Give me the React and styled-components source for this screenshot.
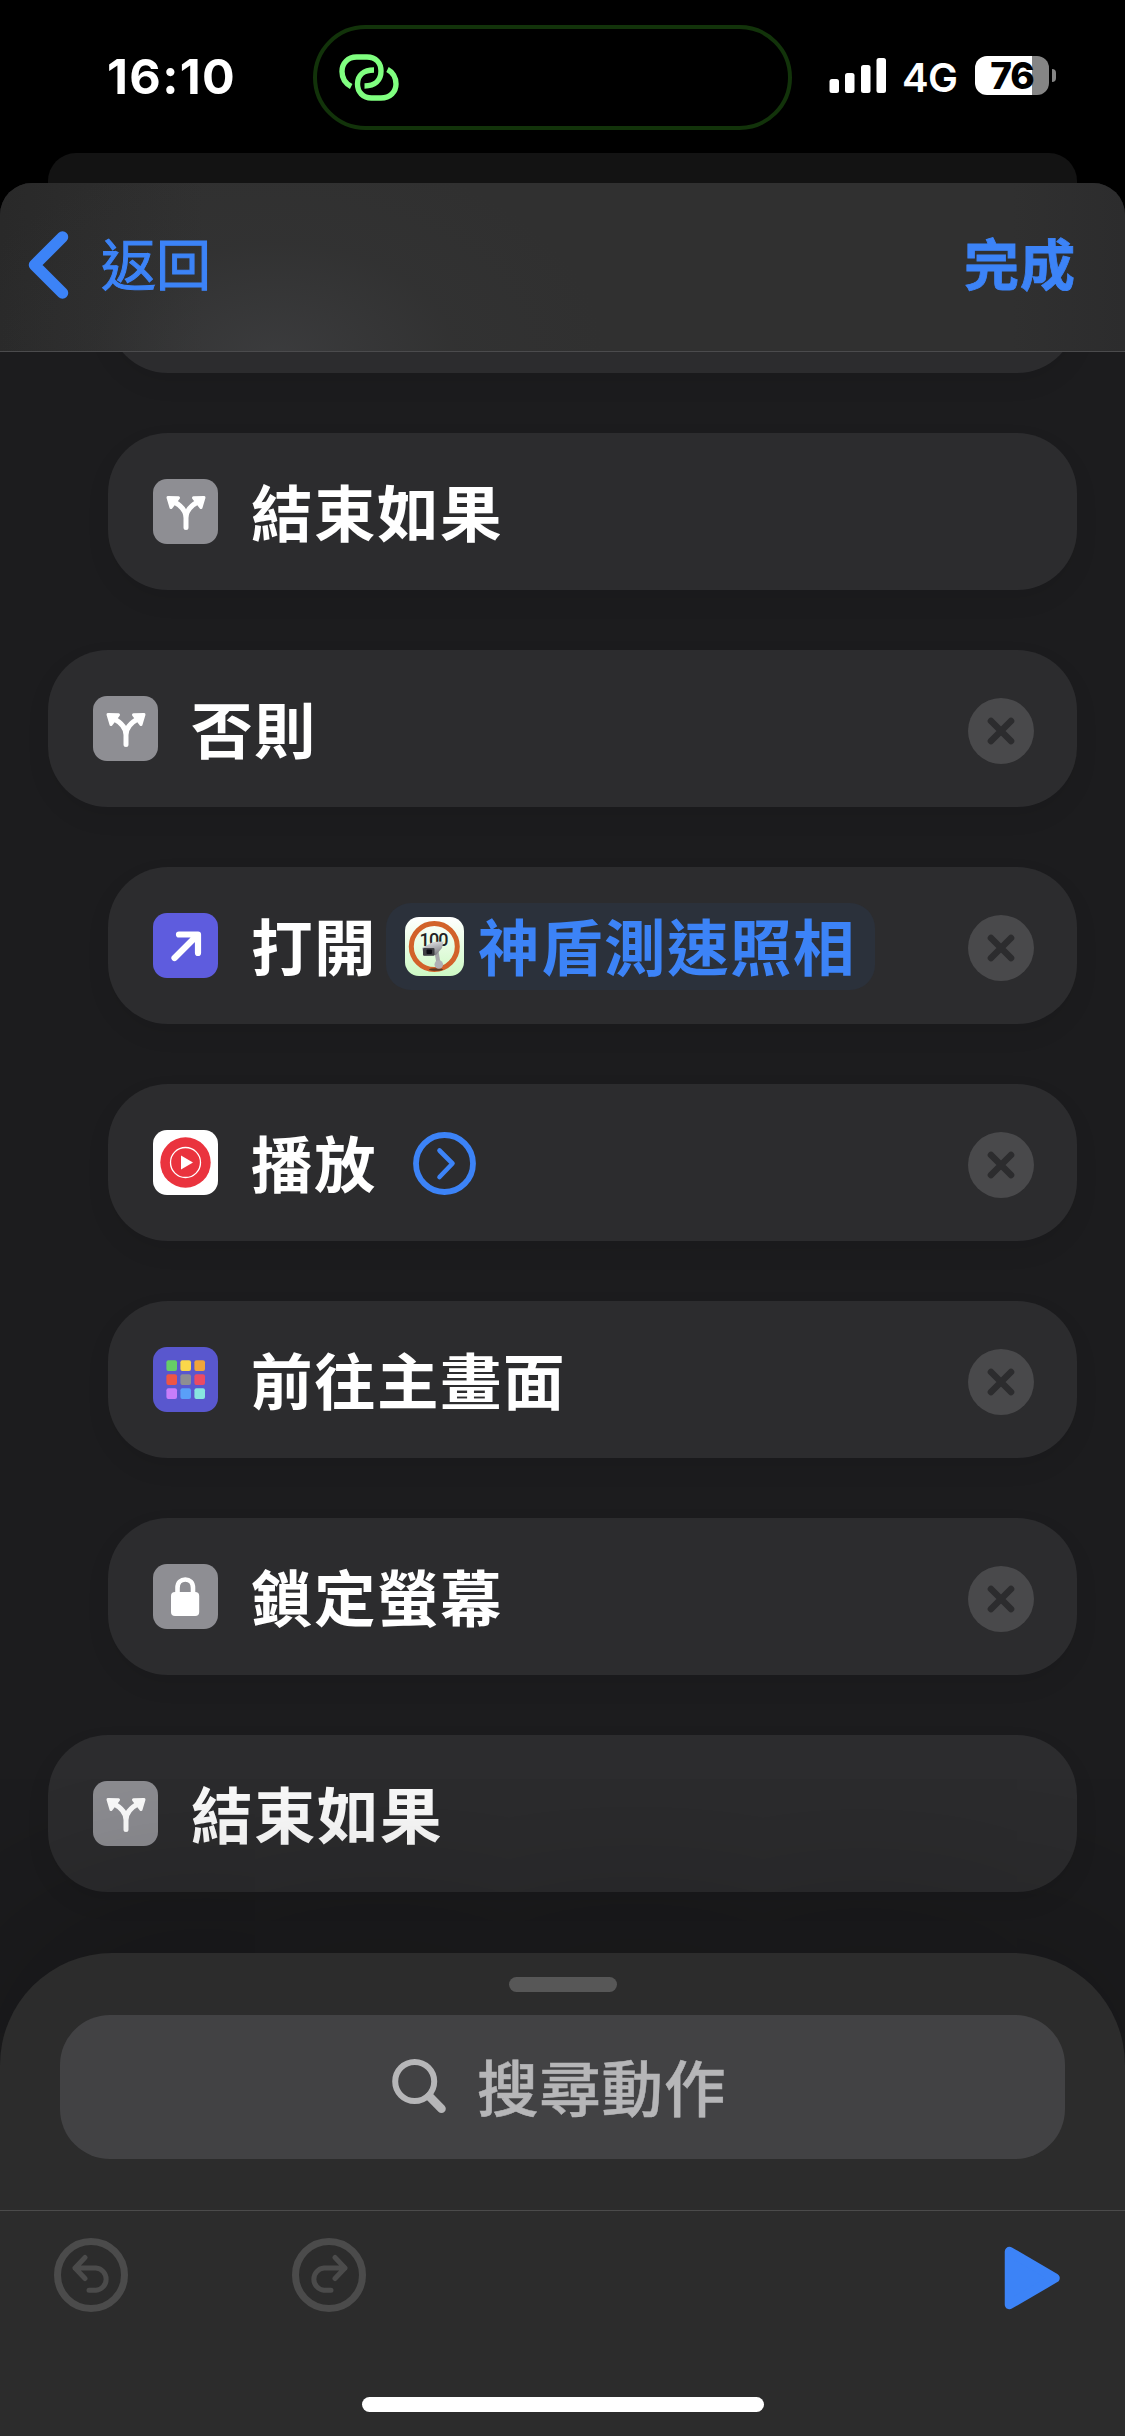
import React from "react";
import styled, { createGlobalStyle } from "styled-components";

const BLUE = "#3c83f7";

const Global = createGlobalStyle`
  body { margin: 0; background: #000; }
  * { box-sizing: border-box; }
  svg { display: block; flex: none; }
`;

const Screen = styled.div`
  width: 1125px;
  height: 2436px;
  overflow: hidden;
  display: flex;
  flex-direction: column;
  background: #000;
  color: #fff;
  font-family: Inter, "Noto Sans CJK TC", sans-serif;
`;

/* ---------- status bar ---------- */
const StatusBar = styled.header`
  height: 153px;
  flex: none;
  display: grid;
  grid-template-columns: 313px 479px 1fr;
  align-items: start;
  padding-top: 25px;
`;
const Time = styled.div`
  padding-left: 107px;
  line-height: 104px;
  font-size: 48.5px;
  font-weight: 700;
  letter-spacing: 1.4px;
`;
const Island = styled.div`
  height: 105px;
  border: 4px solid #12330a;
  border-radius: 53px;
  display: flex;
  align-items: center;
  padding: 0 0 2px 22px;
`;
const StatusRight = styled.div`
  display: flex;
  align-items: center;
  height: 101px;
  padding-left: 37px;
`;
const Network = styled.span`
  width: 54px;
  margin: 5px 0 0 15px;
  font-size: 40px;
  font-weight: 600;
  letter-spacing: -0.6px;
  line-height: 48px;
`;
const Battery = styled.div`
  width: 74px;
  height: 39px;
  margin: 0 3px 0 19px;
  border-radius: 12px;
  background: linear-gradient(90deg, #fff 57px, #858585 57px);
  color: #000;
  font-size: 37px;
  font-weight: 800;
  line-height: 40px;
  letter-spacing: -1.2px;
  text-align: center;
`;
const Nub = styled.div`
  width: 4px;
  height: 13px;
  border-radius: 0 6px 6px 0;
  background: #858585;
`;

/* ---------- sheets ---------- */
const BackSheet = styled.div`
  height: 30px;
  flex: none;
  margin: 0 48px;
  border-radius: 28px 28px 0 0;
  background: #131313;
`;
const Sheet = styled.main`
  flex: 1;
  min-height: 0;
  display: flex;
  flex-direction: column;
  overflow: hidden;
  border-radius: 32px 32px 0 0;
  background: #1c1c1e;
`;
const NavBar = styled.nav`
  height: 169px;
  flex: none;
  display: flex;
  align-items: center;
  justify-content: space-between;
  padding: 0 49px 4px 28px;
  border-bottom: 1px solid #4b4b4d;
  background:
    radial-gradient(ellipse 330px 210px at 275px 175px, rgba(68, 69, 72, 0.55), rgba(56, 57, 58, 0.2) 55%, rgba(50, 50, 52, 0)),
    linear-gradient(90deg, #292929, #303030 18%, #303030 90%, #2c2c2d);
`;
const NavButton = styled.button`
  display: flex;
  align-items: center;
  gap: 32px;
  padding: 0;
  border: 0;
  background: none;
  color: ${BLUE};
  font-family: inherit;
  font-size: 55px;
  font-weight: ${(p) => (p.$bold ? 700 : 400)};
  line-height: 76px;
  letter-spacing: ${(p) => (p.$bold ? 1 : 0)}px;
  -webkit-text-stroke: ${(p) => (p.$bold ? 0.8 : 1)}px ${BLUE};
`;

/* ---------- action list ---------- */
const List = styled.section`
  height: 1601px;
  flex: none;
  overflow: hidden;
  display: flex;
  flex-direction: column;
  gap: 60px;
  padding: 0 48px;
`;
const Card = styled.article`
  height: 157px;
  flex: none;
  margin-left: ${(p) => (p.$nested ? 60 : 0)}px;
  margin-top: ${(p) => (p.$scrolled ? -136 : 0)}px;
  display: flex;
  align-items: center;
  padding: 0 43px 0 45px;
  border-radius: 60px;
  background: #2c2c2e;
  box-shadow: 0 10px 24px rgba(0, 0, 0, 0.07);
`;
const Tile = styled.div`
  width: 65px;
  height: 65px;
  flex: none;
  margin: 0 33px 1px 0;
  border-radius: 14px;
  overflow: hidden;
  background: ${(p) => p.$color};
`;
const Label = styled.span`
  padding-top: 6px;
  font-size: 61.5px;
  font-weight: 700;
  letter-spacing: 1.5px;
  line-height: 80px;
  white-space: nowrap;
  color: ${(p) => p.$color || "#fff"};
`;
const Chip = styled.span`
  display: flex;
  align-items: center;
  gap: 14px;
  width: 489px;
  height: 87px;
  margin: 1px 0 0 9px;
  padding-left: 19px;
  border-radius: 25px;
  background: #2b313b;
`;
const ChipIcon = styled.span`
  width: 59px;
  height: 59px;
  flex: none;
  border-radius: 14px;
  overflow: hidden;
`;
const Expand = styled.span`
  margin: 2px 0 0 35px;
`;
const Remove = styled.button`
  width: 66px;
  height: 66px;
  margin: 4px 0 0 auto;
  padding: 0;
  border: 0;
  border-radius: 50%;
  background: #49494b;
`;

/* ---------- bottom panel ---------- */
const Panel = styled.footer`
  position: relative;
  flex: 1;
  display: flex;
  flex-direction: column;
  align-items: center;
  border-radius: 112px 112px 0 0;
  background: #2c2c2c;
  box-shadow: 0 0 290px rgba(0, 0, 0, 0.42);
`;
const Grabber = styled.div`
  width: 108px;
  height: 15px;
  margin-top: 24px;
  border-radius: 8px;
  background: #575757;
`;
const Search = styled.div`
  width: 1005px;
  height: 144px;
  margin-top: 23px;
  display: flex;
  align-items: center;
  padding-left: 332px;
  gap: 29px;
  border-radius: 50px;
  background: #424244;
  color: #b6b6b8;
  font-size: 61.5px;
  font-weight: 500;
  letter-spacing: 0.8px;
  line-height: 80px;
  -webkit-text-stroke: 0.5px #b6b6b8;
`;
const SearchText = styled.span`
  padding-top: 5px;
`;
const Toolbar = styled.div`
  width: 100%;
  height: 130px;
  margin-top: 51px;
  border-top: 1px solid #4b4b4b;
  display: flex;
  align-items: center;
  padding: 0 64px 0 54px;
`;
const ToolGroup = styled.div`
  flex: 1;
  display: flex;
  gap: 164px;
  padding-bottom: 2px;
`;
const PlayButton = styled.div`
  padding-top: 4px;
`;
const HomeIndicator = styled.div`
  width: 402px;
  height: 15px;
  margin-top: 57px;
  border-radius: 8px;
  background: #fff;
`;

/* ---------- drawings ---------- */
const LinkIcon = () => (
  <svg width="60" height="48" viewBox="0 0 60 48" fill="none" stroke="#80ff80" strokeWidth="5.4">
    <path d="M12.2 33.5 C6.5 30.5 3 25 3 18.5 C3 10 9 4 17.500 4 H28 C37 4 42 10 42 18 C42 27.500 36 33 25.500 33" />
    <path d="M35 17 C24.500 17 18.500 22.500 18.500 31 C18.500 39 24 45 32.500 45 H42 C51 45 57 39 57 31 C57 24.500 53.500 19 48.500 16.500" />
  </svg>
);
const SignalIcon = () => (
  <svg width="58" height="36" viewBox="0 0 58 36" fill="#fff">
    <rect x="0.500" y="21" width="9.500" height="14" rx="2.500" />
    <rect x="16" y="15" width="9.500" height="20" rx="2.500" />
    <rect x="32" y="7" width="9.500" height="28" rx="2.500" />
    <rect x="47.500" y="0" width="9.500" height="35" rx="2.500" />
  </svg>
);
const BackIcon = () => (
  <svg width="41" height="68" viewBox="0 0 41 68" fill="none" stroke={BLUE} strokeWidth="11.5" strokeLinecap="round" strokeLinejoin="round">
    <path d="M34.500 6 L6.500 34 L34.500 62" />
  </svg>
);
const BranchIcon = () => (
  <svg width="65" height="65" viewBox="0 0 65 65">
    <path d="M33 48.500 V39 C33 32 28 26.500 20.500 22.500 M33 39 C33 32 38 26.500 45.500 22.500" fill="none" stroke="#fff" strokeWidth="5" strokeLinecap="round" />
    <path d="M15 18.500 L25.500 18.800 L18 28.500 Z M51 18.500 L40.500 18.800 L48 28.500 Z" fill="#fff" stroke="#fff" strokeWidth="3" strokeLinejoin="round" />
  </svg>
);
const ArrowIcon = () => (
  <svg width="65" height="65" viewBox="0 0 65 65" fill="none" stroke="#fff" strokeWidth="6.2" strokeLinecap="round" strokeLinejoin="round">
    <path d="M26 21.500 H45 V40 M44 22.500 L21.500 45" />
  </svg>
);
const MusicIcon = () => (
  <svg width="65" height="65" viewBox="0 0 65 65">
    <circle cx="32.500" cy="32.500" r="25.200" fill="#ea333e" />
    <circle cx="32.500" cy="32.500" r="15" fill="none" stroke="#fff" strokeWidth="1.300" />
    <path d="M28 25.500 L40 32.500 L28 39.500 Z" fill="#fff" />
  </svg>
);
const GRID = ["#66ce67", "#fad74a", "#f1a43a", "#ee5545", "#8e8e93", "#eb4b63", "#c77dfa", "#5a9ff8", "#88e5e0"];
const GridIcon = () => (
  <svg width="65" height="65" viewBox="0 0 65 65">
    {GRID.map((c, i) => (
      <rect key={c} x={13.4 + (i % 3) * 14} y={13.3 + Math.floor(i / 3) * 14} width="10.600" height="10.600" rx="2" fill={c} />
    ))}
  </svg>
);
const LockIcon = () => (
  <svg width="65" height="65" viewBox="0 0 65 65">
    <rect x="18" y="28" width="28.200" height="24" rx="4" fill="#fff" />
    <path d="M24.500 30 V24 C24.500 18.500 28 15.500 32.300 15.500 C36.600 15.500 40 18.500 40 24 V30" fill="none" stroke="#fff" strokeWidth="4.600" />
  </svg>
);
const CameraIcon = () => (
  <svg width="59" height="59" viewBox="0 0 59 59">
    <defs>
      <linearGradient id="leaf" x1="0" y1="0" x2="0" y2="1">
        <stop offset="0" stopColor="#fff" />
        <stop offset="1" stopColor="#cdf9c4" />
      </linearGradient>
      <linearGradient id="metal" x1="0" y1="0" x2="0.3" y2="1">
        <stop offset="0" stopColor="#ececee" />
        <stop offset="0.5" stopColor="#b4b4b8" />
        <stop offset="1" stopColor="#808084" />
      </linearGradient>
    </defs>
    <rect width="59" height="59" fill="url(#leaf)" />
    <circle cx="29.300" cy="29.500" r="23" fill="none" stroke="#d2622a" strokeWidth="5" />
    <text x="29" y="28.500" textAnchor="middle" fontFamily="Roboto, sans-serif" fontSize="18" fontWeight="500" fill="#222" textLength="29">100</text>
    <ellipse cx="31" cy="52.500" rx="7" ry="1.300" fill="#5b3a24" />
    <path d="M29.500 36 L33.500 34 L35.500 46 L31.500 46 Z" fill="#a5a5a9" />
    <circle cx="33.800" cy="47.500" r="4.300" fill="#b0b0b4" />
    <path d="M17 31 L28 25 L38.500 24.500 L37 31 L31 38 L19 38.500 Z" fill="url(#metal)" />
    <rect x="18" y="31" width="11.500" height="7.800" rx="1" fill="#3f3f44" />
    <rect x="21.500" y="32.500" width="5.500" height="4.500" rx="1" fill="#0c0c14" />
  </svg>
);
const ExpandIcon = () => (
  <svg width="65" height="65" viewBox="0 0 65 65" fill="none" stroke={BLUE} strokeLinecap="round" strokeLinejoin="round">
    <circle cx="32.500" cy="32.500" r="28.500" strokeWidth="5.800" />
    <path d="M27.500 19.500 L40.500 32.500 L27.500 46" strokeWidth="4.600" />
  </svg>
);
const RemoveIcon = () => (
  <svg width="66" height="66" viewBox="0 0 66 66" fill="none" stroke="#2c2c2e" strokeWidth="6.600" strokeLinecap="round">
    <path d="M23 23 L43 43 M43 23 L23 43" />
  </svg>
);
const SearchIcon = () => (
  <svg width="56" height="56" viewBox="0 0 56 56" fill="none" stroke="#b6b6b8" strokeLinecap="round">
    <circle cx="22.700" cy="22.500" r="19.500" strokeWidth="6" />
    <path d="M37.500 37.500 L49.500 49.700" strokeWidth="8.600" />
  </svg>
);
const UndoIcon = ({ flipped }) => (
  <svg width="74" height="74" viewBox="0 0 74 74" fill="none" stroke="#4b4b4b" strokeLinecap="round" strokeLinejoin="round">
    <circle cx="37" cy="37" r="33.500" strokeWidth="7" />
    <path transform={flipped ? "matrix(-1 0 0 1 74 0)" : undefined} d="M31 19.500 L21 30 L31 40.500 M21 30 H42 A11.200 11.200 0 0 1 42 52.300 H35" strokeWidth="5" />
  </svg>
);
const PlayIcon = () => (
  <svg width="57" height="64" viewBox="0 0 57 64">
    <path d="M5.500 5.500 L51 32 L5.500 58.500 Z" fill={BLUE} stroke={BLUE} strokeWidth="9.500" strokeLinejoin="round" />
  </svg>
);

const GRAY = "#8e8e93";

const Action = ({ icon, color, text, nested, removable, children }) => (
  <Card $nested={nested}>
    <Tile $color={color}>{icon}</Tile>
    <Label>{text}</Label>
    {children}
    {removable && (
      <Remove aria-label="remove">
        <RemoveIcon />
      </Remove>
    )}
  </Card>
);

export default function App() {
  return (
    <>
      <Global />
      <Screen>
        <StatusBar>
          <Time>16:10</Time>
          <Island>
            <LinkIcon />
          </Island>
          <StatusRight>
            <SignalIcon />
            <Network>4G</Network>
            <Battery>76</Battery>
            <Nub />
          </StatusRight>
        </StatusBar>
        <BackSheet />
        <Sheet>
          <NavBar>
            <NavButton>
              <BackIcon />
              返回
            </NavButton>
            <NavButton $bold>完成</NavButton>
          </NavBar>
          <List>
            <Card $nested $scrolled />
            <Action nested icon={<BranchIcon />} color={GRAY} text="結束如果" />
            <Action removable icon={<BranchIcon />} color={GRAY} text="否則" />
            <Action nested removable icon={<ArrowIcon />} color="#5e5cde" text="打開">
              <Chip>
                <ChipIcon>
                  <CameraIcon />
                </ChipIcon>
                <Label $color={BLUE}>神盾測速照相</Label>
              </Chip>
            </Action>
            <Action nested removable icon={<MusicIcon />} color="#fff" text="播放">
              <Expand>
                <ExpandIcon />
              </Expand>
            </Action>
            <Action nested removable icon={<GridIcon />} color="#5957ce" text="前往主畫面" />
            <Action nested removable icon={<LockIcon />} color={GRAY} text="鎖定螢幕" />
            <Action icon={<BranchIcon />} color={GRAY} text="結束如果" />
          </List>
          <Panel>
            <Grabber />
            <Search>
              <SearchIcon />
              <SearchText>搜尋動作</SearchText>
            </Search>
            <Toolbar>
              <ToolGroup>
                <UndoIcon />
                <UndoIcon flipped />
              </ToolGroup>
              <PlayButton>
                <PlayIcon />
              </PlayButton>
            </Toolbar>
            <HomeIndicator />
          </Panel>
        </Sheet>
      </Screen>
    </>
  );
}
